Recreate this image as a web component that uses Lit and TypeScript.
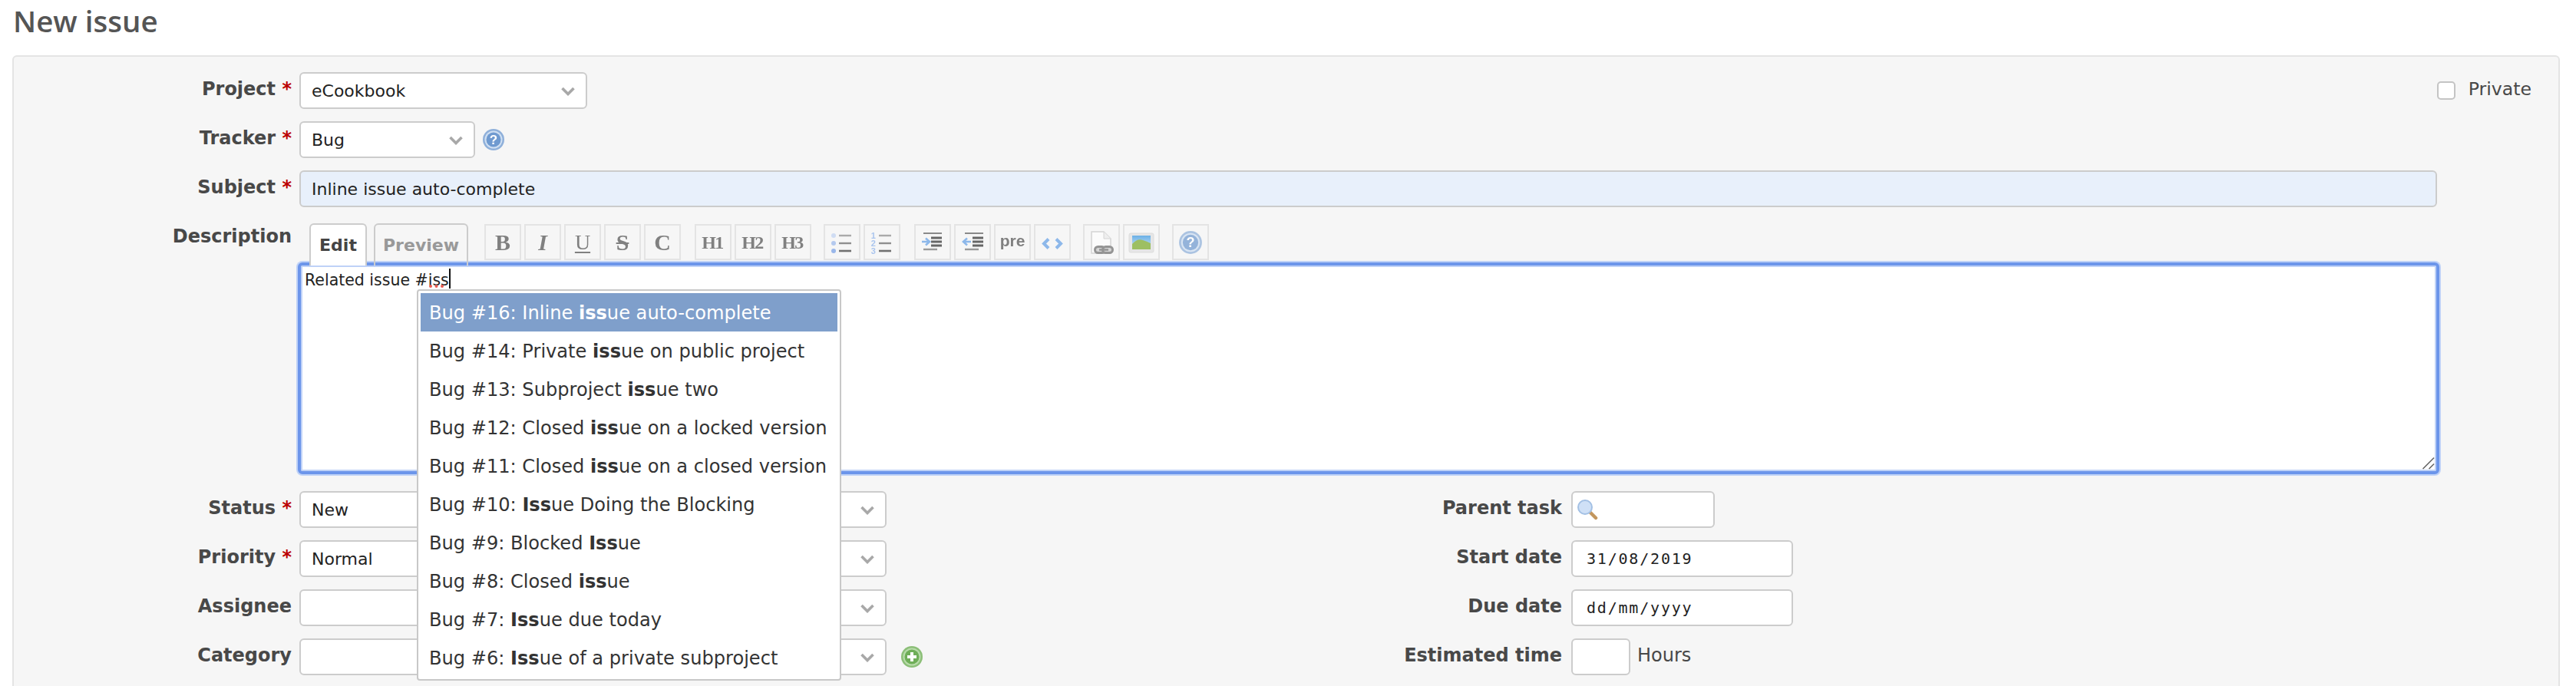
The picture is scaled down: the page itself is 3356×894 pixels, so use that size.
import { LitElement, html, css, svg } from "lit";
import { customElement } from "lit/decorators.js";

const chevron = html`<svg class="chev" viewBox="0 0 18 12" width="18" height="12"><path d="M1.5 2 L9 9.5 L16.5 2" fill="none" stroke="#a8a8a8" stroke-width="3.6"/></svg>`;

const helpIcon = (cls: string) => html`<svg class="${cls}" viewBox="0 0 30 30" width="30" height="30">
  <circle cx="15" cy="15" r="14" fill="#8fb0da"/>
  <circle cx="15" cy="15" r="11.5" fill="#cfdff2"/>
  <circle cx="15" cy="15" r="9.5" fill="#6f9ad0"/>
  <text x="15" y="21" text-anchor="middle" font-family="Liberation Sans" font-weight="700" font-size="17" fill="#fff">?</text>
</svg>`;

const plusIcon = html`<svg class="plus" viewBox="0 0 30 30" width="30" height="30">
  <circle cx="15" cy="15" r="14" fill="#8cbf78"/>
  <circle cx="15" cy="15" r="11.5" fill="#b9dcab"/>
  <circle cx="15" cy="15" r="9.5" fill="#6fae58"/>
  <path d="M15 9 V21 M9 15 H21" stroke="#fff" stroke-width="4"/>
</svg>`;

const searchIcon = html`<svg class="search" viewBox="0 0 28 28" width="28" height="28">
  <path d="M17 17 L25 25" stroke="#c2965e" stroke-width="4.5" stroke-linecap="round"/>
  <circle cx="11" cy="11" r="9" fill="#cfe0f6" stroke="#a3c0e4" stroke-width="2"/>
</svg>`;

const tb = (inner: unknown) => html`<svg viewBox="2 2 44 43" width="44" height="43">${inner}</svg>`;

const ulIcon = tb(svg`
  <circle cx="13" cy="15" r="3" fill="#cfdcf3"/><circle cx="13" cy="25" r="3" fill="#b4c9ee"/><circle cx="13" cy="35" r="3" fill="#9ab7ea"/>
  <path d="M20 15 H36" stroke="#aaa" stroke-width="2.4"/><path d="M20 25 H36" stroke="#8f8f8f" stroke-width="2.4"/><path d="M20 35 H36" stroke="#707070" stroke-width="2.6"/>`);
const olIcon = tb(svg`
  <g font-family="Liberation Sans" font-weight="700" font-size="11" fill="#aac5ee" text-anchor="middle">
    <text x="12.7" y="19">1</text><text x="12.7" y="29">2</text><text x="12.7" y="39">3</text></g>
  <path d="M20 15 H36" stroke="#aaa" stroke-width="2.4"/><path d="M20 25 H36" stroke="#8f8f8f" stroke-width="2.4"/><path d="M20 35 H36" stroke="#707070" stroke-width="2.6"/>`);
const indentIcon = tb(svg`
  <path d="M12 12 H36" stroke="#8a8a8a" stroke-width="2"/>
  <path d="M22 18 H36 M22 23 H36 M22 28 H36" stroke="#666" stroke-width="3"/>
  <path d="M12 33 H30" stroke="#999" stroke-width="2.4"/>
  <path d="M10 23 H19 M15 18.5 L20 23 L15 27.5" fill="none" stroke="#8db8ea" stroke-width="2.6"/>`);
const outdentIcon = tb(svg`
  <path d="M14 12 H38" stroke="#8a8a8a" stroke-width="2"/>
  <path d="M24 18 H38 M24 23 H38 M24 28 H38" stroke="#666" stroke-width="3"/>
  <path d="M14 33 H32" stroke="#999" stroke-width="2.4"/>
  <path d="M22 23 H13 M17 18.5 L12 23 L17 27.5" fill="none" stroke="#8db8ea" stroke-width="2.6"/>`);
const codeIcon = tb(svg`
  <path d="M19 19.5 L13 25.5 L19 31.5 M29 19.5 L35 25.5 L29 31.5" fill="none" stroke="#8db8ea" stroke-width="4"/>`);
const linkIcon = tb(svg`
  <path d="M11 10 H27 L36 19 V38 H11 Z" fill="#fbfbfb" stroke="#d4d4d4" stroke-width="1.5"/>
  <path d="M27 10 V19 H36" fill="#eee" stroke="#d4d4d4" stroke-width="1"/>
  <rect x="15.5" y="29.5" width="13" height="8" rx="4" fill="#d4d4d4" stroke="#949494" stroke-width="3"/>
  <rect x="25.5" y="29.5" width="13" height="8" rx="4" fill="#d4d4d4" stroke="#949494" stroke-width="3"/>
  <path d="M21 33.5 H33" stroke="#949494" stroke-width="2.5"/>`);
const imageIcon = tb(svg`
  <defs><linearGradient id="sky" x1="0" y1="0" x2="0" y2="1"><stop offset="0" stop-color="#6bb0e6"/><stop offset="1" stop-color="#d4e9f7"/></linearGradient></defs>
  <rect x="8" y="12" width="32" height="25" rx="2" fill="#e6e6e6" stroke="#dcdcdc" stroke-width="1"/>
  <rect x="12" y="15" width="24" height="18" fill="url(#sky)"/>
  <path d="M12 26 Q19 18 26 21 Q32 23 36 25 V33 H12 Z" fill="#9dbf62"/>`);

const ISSUES: [string, string, string][] = [
  ["Bug #16: Inline ", "iss", "ue auto-complete"],
  ["Bug #14: Private ", "iss", "ue on public project"],
  ["Bug #13: Subproject ", "iss", "ue two"],
  ["Bug #12: Closed ", "iss", "ue on a locked version"],
  ["Bug #11: Closed ", "iss", "ue on a closed version"],
  ["Bug #10: ", "Iss", "ue Doing the Blocking"],
  ["Bug #9: Blocked ", "Iss", "ue"],
  ["Bug #8: Closed ", "iss", "ue"],
  ["Bug #7: ", "Iss", "ue due today"],
  ["Bug #6: ", "Iss", "ue of a private subproject"],
];

@customElement("app-root")
export class AppRoot extends LitElement {
  static styles = css`
    :host {
      display: block;
      width: 3356px;
      height: 894px;
      overflow: hidden;
      background: #fff;
      color: #484848;
      font-family: "DejaVu Sans", Verdana, sans-serif;
      font-size: 24px;
    }
    * { box-sizing: border-box; }
    h2 {
      margin: 0;
      height: 72px;
      padding-left: 17px;
      font-family: "Open Sans", sans-serif;
      font-weight: 600;
      font-size: 38.5px;
      line-height: 54px;
      color: #555;
    }
    .panel {
      margin: 0 21px 0 16px;
      height: 900px;
      background: #f6f6f6;
      border: 2px solid #e4e4e4;
      border-radius: 6px;
      padding-top: 20px;
    }
    .rows { display: flex; flex-direction: column; gap: 16px; }
    .row { display: flex; align-items: flex-start; height: 48px; }
    .label {
      flex: none;
      width: 362px;
      margin-right: 10px;
      text-align: right;
      font-weight: 700;
      line-height: 44px;
      white-space: pre;
    }
    .req { color: #bb0000; }
    .ctl {
      flex: none;
      display: flex;
      align-items: center;
      height: 48px;
      padding: 0 14px;
      background: #fff;
      border: 2px solid #ccc;
      border-radius: 6px;
      font-size: 22px;
      color: #222;
      white-space: pre;
    }
    .chev { margin-left: auto; flex: none; filter: blur(0.4px); margin-top: 2px; }
    .w-project { width: 375px; }
    .w-tracker { width: 229px; }
    .w-status { width: 765px; }
    .subject { flex: 1; margin-right: 158px; background: #e8f0fb; }
    .help { flex: none; margin: 9px 0 0 9px; filter: blur(0.6px); }
    .plus { flex: none; margin: 9px 0 0 18px; filter: blur(0.6px); }
    .private {
      margin-left: auto;
      padding-right: 35px;
      display: flex;
      align-items: flex-start;
      line-height: 44px;
      font-size: 23.6px;
    }
    .cb {
      width: 24px;
      height: 24px;
      margin: 12px 17px 0 0;
      background: #fff;
      border: 2px solid #c4c4c4;
      border-radius: 5px;
    }
    .head { display: flex; align-items: flex-start; height: 51px; margin-top: 21px; }
    .head .label { line-height: 34px; margin-right: 23px; }
    .tabs {
      position: relative;
      z-index: 1;
      display: flex;
      gap: 9px;
      height: 55px;
      font-size: 22px;
      font-weight: 700;
    }
    .tab {
      height: 55px;
      padding-top: 12px;
      text-align: center;
      line-height: 30px;
      border: 2px solid #ccc;
      border-bottom: none;
      border-radius: 6px 6px 0 0;
    }
    .tab.edit { width: 75px; background: #fff; color: #444; }
    .tab.preview { width: 123px; color: #999; }
    .toolbar { display: flex; margin: 1px 0 0 21px; }
    .group { display: flex; gap: 4px; }
    .group + .group { margin-left: 16px; }
    .group.wide { margin-left: 18px; }
    .btn {
      width: 48px;
      height: 47px;
      display: flex;
      align-items: center;
      justify-content: center;
      border: 2px solid #e4e4e4;
      color: #808080;
      font-family: "Liberation Serif", serif;
      font-size: 30px;
      line-height: 1;
      overflow: hidden;
    }
    .btn > span { filter: blur(0.55px); }
    .btn svg { flex: none; filter: blur(0.35px); }
    .btn .b { font-weight: 700; }
    .btn .i { font-style: italic; font-weight: 700; }
    .btn .u { text-decoration: underline; text-decoration-thickness: 2px; text-underline-offset: 3px; font-size: 28px; }
    .btn .s { text-decoration: line-through; text-decoration-thickness: 2px; font-weight: 700; }
    .btn .h { font-size: 24px; font-weight: 700; letter-spacing: -1.5px; margin-right: 2px; }
    .btn .pre { font-family: "Liberation Sans", sans-serif; font-size: 21px; font-weight: 700; margin-top: -4px; }
    .tb-help { width: 32px; height: 32px; opacity: 0.72; }
    .editor {
      position: relative;
      width: 2790px;
      height: 276px;
      margin-left: 370px;
      margin-bottom: 22px;
      padding: 1px 5px;
      background: #fff;
      border: 4px solid #6c95ea;
      border-radius: 6px;
      box-shadow: 0 0 0 2px #bfd2f7, inset 0 0 0 2px #bfd2f7;
      font-size: 20.5px;
      line-height: 36px;
      color: #222;
    }
    .editor-text { white-space: pre; }
    .sp { position: relative; }
    .dots { position: absolute; left: 0; top: 17px; }
    .caret {
      display: inline-block;
      width: 2px;
      height: 26px;
      background: #111;
      vertical-align: -4px;
    }
    .resize { position: absolute; right: 2px; bottom: 2px; }
    .menu {
      position: absolute;
      z-index: 2;
      left: 151px;
      top: 31px;
      width: 553px;
      padding: 3px;
      background: #fff;
      border: 2px solid #c8c8c8;
      border-radius: 4px;
      font-size: 24.1px;
      color: #333;
    }
    .item { height: 50px; padding-left: 11px; line-height: 52px; white-space: pre; }
    .item.on { background: #7f9fcb; color: #fff; }
    .bottom { display: flex; align-items: flex-start; }
    .col.left { width: 1680px; }
    .col.right .label { width: 337px; margin-right: 12px; }
    .parent { width: 187px; padding: 0 5px; }
    .date {
      width: 289px;
      padding: 0 18px;
      font-family: "DejaVu Sans Mono", monospace;
      font-size: 20px;
      letter-spacing: 1.8px;
    }
    .est { width: 77px; }
    .hours { margin-left: 9px; line-height: 44px; font-size: 24px; }
  `;

  private sel(value: string, cls: string) {
    return html`<div class="ctl ${cls}"><span>${value}</span>${chevron}</div>`;
  }

  private lab(text: string, req = false) {
    return html`<div class="label">${text}${req ? html` <span class="req">*</span>` : ""}</div>`;
  }

  render() {
    return html`
      <h2>New issue</h2>
      <div class="panel">
        <div class="rows">
          <div class="row">
            ${this.lab("Project", true)}${this.sel("eCookbook", "w-project")}
            <div class="private"><div class="cb"></div><span>Private</span></div>
          </div>
          <div class="row">${this.lab("Tracker", true)}${this.sel("Bug", "w-tracker")}${helpIcon("help")}</div>
          <div class="row">${this.lab("Subject", true)}<div class="ctl subject">Inline issue auto-complete</div></div>
        </div>

        <div class="head">
          ${this.lab("Description")}
          <div class="tabs">
            <div class="tab edit">Edit</div>
            <div class="tab preview">Preview</div>
          </div>
          <div class="toolbar">
            <div class="group">
              <div class="btn"><span class="b">B</span></div>
              <div class="btn"><span class="i">I</span></div>
              <div class="btn"><span class="u">U</span></div>
              <div class="btn"><span class="s">S</span></div>
              <div class="btn"><span class="b">C</span></div>
            </div>
            <div class="group wide">
              <div class="btn"><span class="h">H1</span></div>
              <div class="btn"><span class="h">H2</span></div>
              <div class="btn"><span class="h">H3</span></div>
            </div>
            <div class="group">
              <div class="btn">${ulIcon}</div>
              <div class="btn">${olIcon}</div>
            </div>
            <div class="group wide">
              <div class="btn">${indentIcon}</div>
              <div class="btn">${outdentIcon}</div>
              <div class="btn"><span class="pre">pre</span></div>
              <div class="btn">${codeIcon}</div>
            </div>
            <div class="group">
              <div class="btn">${linkIcon}</div>
              <div class="btn">${imageIcon}</div>
            </div>
            <div class="group">
              <div class="btn">${helpIcon("tb-help")}</div>
            </div>
          </div>
        </div>

        <div class="editor">
          <div class="editor-text">Related issue #<span class="sp">iss<svg class="dots" width="24" height="6" viewBox="0 0 24 6"><circle cx="3" cy="3" r="2" fill="#ea5a50"/><circle cx="10.5" cy="3" r="2" fill="#ea5a50"/><circle cx="18" cy="3" r="2" fill="#ea5a50"/></svg></span><span class="caret"></span></div>
          <svg class="resize" width="18" height="18" viewBox="0 0 18 18"><path d="M2.5 17 L17 2.5 M10.5 17 L17 10.5" stroke="#666" stroke-width="1.6" fill="none"/></svg>
          <div class="menu">
            ${ISSUES.map(
              (it, i) => html`<div class="item ${i === 0 ? "on" : ""}">${it[0]}<b>${it[1]}</b>${it[2]}</div>`
            )}
          </div>
        </div>

        <div class="bottom">
          <div class="col left rows">
            <div class="row">${this.lab("Status", true)}${this.sel("New", "w-status")}</div>
            <div class="row">${this.lab("Priority", true)}${this.sel("Normal", "w-status")}</div>
            <div class="row">${this.lab("Assignee")}${this.sel("", "w-status")}</div>
            <div class="row">${this.lab("Category")}${this.sel("", "w-status")}${plusIcon}</div>
          </div>
          <div class="col right rows">
            <div class="row">${this.lab("Parent task")}<div class="ctl parent">${searchIcon}</div></div>
            <div class="row">${this.lab("Start date")}<div class="ctl date">31/08/2019</div></div>
            <div class="row">${this.lab("Due date")}<div class="ctl date">dd/mm/yyyy</div></div>
            <div class="row">${this.lab("Estimated time")}<div class="ctl est"></div><span class="hours">Hours</span></div>
          </div>
        </div>
      </div>
    `;
  }
}
